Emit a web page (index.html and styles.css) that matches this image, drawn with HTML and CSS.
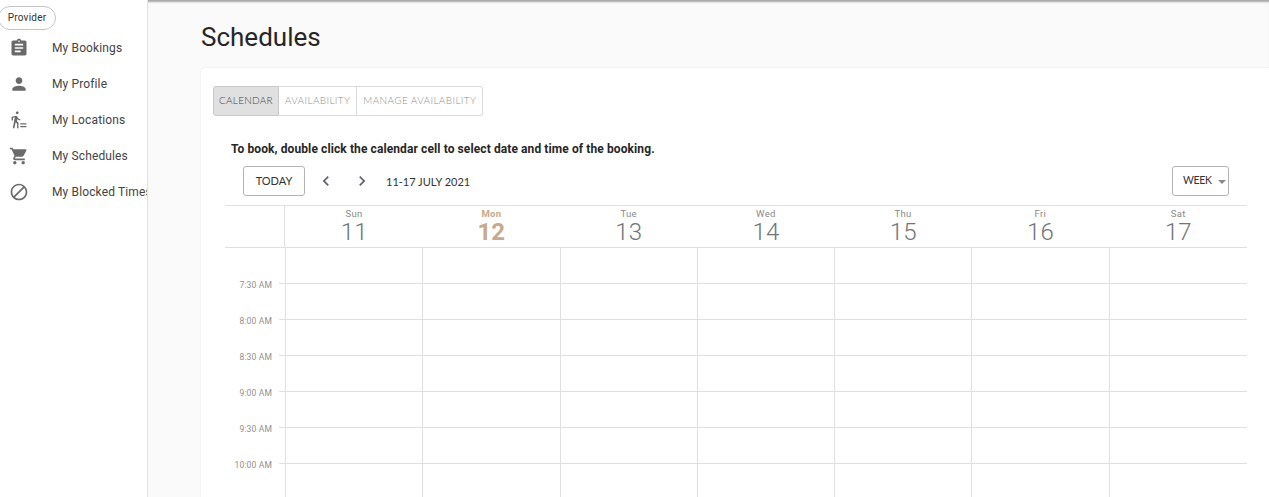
FILE: index.html
```html
<!DOCTYPE html>
<html lang="en">
<head>
<meta charset="utf-8">
<title>Schedules</title>
<link rel="stylesheet" href="styles.css">
</head>
<body>
<aside class="sidebar">
  <div class="pill">Provider</div>
  <nav class="nav">
    <a class="nav-item"><svg class="nav-icon" viewBox="0 0 24 24"><path d="M19 3h-4.18C14.4 1.84 13.3 1 12 1c-1.3 0-2.4.84-2.82 2H5c-1.1 0-2 .9-2 2v14c0 1.1.9 2 2 2h14c1.1 0 2-.9 2-2V5c0-1.1-.9-2-2-2zm-7 0c.55 0 1 .45 1 1s-.45 1-1 1-1-.45-1-1 .45-1 1-1zm2 14H7v-2h7v2zm3-4H7v-2h10v2zm0-4H7V7h10v2z"/></svg>My Bookings</a>
    <a class="nav-item"><svg class="nav-icon" viewBox="0 0 24 24"><path d="M12 12c2.21 0 4-1.79 4-4s-1.79-4-4-4-4 1.79-4 4 1.79 4 4 4zm0 2c-2.67 0-8 1.34-8 4v2h16v-2c0-2.66-5.33-4-8-4z"/></svg>My Profile</a>
    <a class="nav-item"><svg class="nav-icon" viewBox="1 0 23 23"><path d="M10.5 4.8c.9 0 1.6-.7 1.6-1.6s-.7-1.6-1.6-1.6-1.6.7-1.6 1.6.7 1.6 1.6 1.6zM7.6 8.2 5.4 21h1.8l1.4-7 1.7 1.7V21h1.6v-6.4l-1.7-1.7.5-2.5c.7 1 1.9 1.7 3.3 1.7v-1.6c-1.3 0-2.3-.7-2.8-1.7l-.8-1.3c-.3-.5-.8-.8-1.4-.8-.2 0-.4 0-.6.1L4 7.8V12h1.6V8.9l2-.7zM14 15.2h7v1.4h-7zM14 18.4h7v1.4h-7z"/></svg>My Locations</a>
    <a class="nav-item"><svg class="nav-icon" viewBox="0 0 24 24"><path d="M7 18c-1.1 0-1.99.9-1.99 2S5.9 22 7 22s2-.9 2-2-.9-2-2-2zM1 2v2h2l3.6 7.59-1.35 2.45c-.16.28-.25.61-.25.96 0 1.1.9 2 2 2h12v-2H7.42c-.14 0-.25-.11-.25-.25l.03-.12.9-1.63h7.45c.75 0 1.41-.41 1.75-1.03l3.58-6.49c.08-.14.12-.31.12-.48 0-.55-.45-1-1-1H5.21l-.94-2H1zm16 16c-1.1 0-1.99.9-1.99 2s.89 2 1.99 2 2-.9 2-2-.9-2-2-2z"/></svg>My Schedules</a>
    <a class="nav-item"><svg class="nav-icon" viewBox="0 0 24 24"><path d="M12 2C6.48 2 2 6.48 2 12s4.48 10 10 10 10-4.48 10-10S17.52 2 12 2zM4 12c0-4.42 3.58-8 8-8 1.85 0 3.55.63 4.9 1.69L5.69 16.9C4.63 15.55 4 13.85 4 12zm8 8c-1.85 0-3.55-.63-4.9-1.69L18.31 7.1C19.37 8.45 20 10.15 20 12c0 4.42-3.58 8-8 8z"/></svg>My Blocked Times</a>
  </nav>
</aside>
<main class="main">
  <h1 class="title">Schedules</h1>
  <section class="card">
    <div class="tabs">
      <button class="tab tab-active">CALENDAR</button>
      <button class="tab">AVAILABILITY</button>
      <button class="tab">MANAGE AVAILABILITY</button>
    </div>
    <div class="calendar">
      <p class="hint">To book, double click the calendar cell to select date and time of the booking.</p>
      <div class="toolbar">
        <button class="btn btn-today">TODAY</button>
        <svg class="chev chev-prev" viewBox="0 0 24 24"><path d="M15.41 7.41 14 6l-6 6 6 6 1.41-1.41L10.83 12z"/></svg>
        <svg class="chev chev-next" viewBox="0 0 24 24"><path d="M8.59 16.59 10 18l6-6-6-6-1.41 1.41L13.17 12z"/></svg>
        <span class="range">11-17 JULY 2021</span>
        <button class="btn btn-week">WEEK<span class="caret"></span></button>
      </div>
      <div class="head">
        <div class="head-gutter"></div>
        <div class="day"><span class="day-name">Sun</span><span class="day-num">11</span></div>
        <div class="day day-today"><span class="day-name">Mon</span><span class="day-num">12</span></div>
        <div class="day"><span class="day-name">Tue</span><span class="day-num">13</span></div>
        <div class="day"><span class="day-name">Wed</span><span class="day-num">14</span></div>
        <div class="day"><span class="day-name">Thu</span><span class="day-num">15</span></div>
        <div class="day"><span class="day-name">Fri</span><span class="day-num">16</span></div>
        <div class="day"><span class="day-name">Sat</span><span class="day-num">17</span></div>
      </div>
      <div class="row row-first"><div class="gutter"></div><i class="cell"></i><i class="cell"></i><i class="cell"></i><i class="cell"></i><i class="cell"></i><i class="cell"></i><i class="cell"></i></div>
      <div class="row"><div class="gutter"><span class="time">7:30 AM</span><span class="tick"></span></div><i class="cell line"></i><i class="cell line"></i><i class="cell line"></i><i class="cell line"></i><i class="cell line"></i><i class="cell line"></i><i class="cell line"></i></div>
      <div class="row"><div class="gutter"><span class="time">8:00 AM</span><span class="tick"></span></div><i class="cell line"></i><i class="cell line"></i><i class="cell line"></i><i class="cell line"></i><i class="cell line"></i><i class="cell line"></i><i class="cell line"></i></div>
      <div class="row"><div class="gutter"><span class="time">8:30 AM</span><span class="tick"></span></div><i class="cell line"></i><i class="cell line"></i><i class="cell line"></i><i class="cell line"></i><i class="cell line"></i><i class="cell line"></i><i class="cell line"></i></div>
      <div class="row"><div class="gutter"><span class="time">9:00 AM</span><span class="tick"></span></div><i class="cell line"></i><i class="cell line"></i><i class="cell line"></i><i class="cell line"></i><i class="cell line"></i><i class="cell line"></i><i class="cell line"></i></div>
      <div class="row"><div class="gutter"><span class="time">9:30 AM</span><span class="tick"></span></div><i class="cell line"></i><i class="cell line"></i><i class="cell line"></i><i class="cell line"></i><i class="cell line"></i><i class="cell line"></i><i class="cell line"></i></div>
      <div class="row"><div class="gutter"><span class="time">10:00 AM</span><span class="tick"></span></div><i class="cell line"></i><i class="cell line"></i><i class="cell line"></i><i class="cell line"></i><i class="cell line"></i><i class="cell line"></i><i class="cell line"></i></div>
    </div>
  </section>
</main>
</body>
</html>
```
FILE: styles.css
```css
* { box-sizing: border-box; }
html, body { height: 100%; }
body {
  margin: 0;
  height: 497px;
  display: flex;
  overflow: hidden;
  background: #fff;
  font-family: Roboto, "Liberation Sans", sans-serif;
  color: #212121;
}
.sidebar {
  flex: 0 0 148px;
  height: 100%;
  border-right: 1px solid #e3e3e3;
  overflow: hidden;
  padding-top: 6px;
}
.pill {
  width: 58px;
  height: 24px;
  margin-left: -2px;
  border: 1px solid #c4c4c4;
  border-radius: 12px;
  font-size: 10px;
  line-height: 22px;
  text-align: center;
  letter-spacing: .2px;
  color: #333;
  background: #fff;
}
.nav { margin-top: 0; }
.nav-item {
  display: flex;
  align-items: center;
  height: 36px;
  padding-left: 9px;
  font-size: 12px;
  letter-spacing: .13px;
  white-space: nowrap;
  color: #444;
}
.nav-icon {
  flex: 0 0 20px;
  width: 20px;
  height: 20px;
  margin-right: 23px;
  fill: #6a6a6a;
}
.main {
  flex: 1;
  min-width: 0;
  height: 100%;
  background: #fafafa;
  box-shadow: inset 0 3px 2px -1px #a8a8a8;
  padding: 0 0 0 53px;
  overflow: hidden;
}
.title {
  margin: 0;
  height: 68px;
  padding-top: 20px;
  font-size: 26px;
  line-height: 34px;
  font-weight: 400;
  color: #262626;
}
.card {
  margin-right: -20px;
  height: 440px;
  padding: 18px 0 0 12px;
  background: #fff;
  border-radius: 4px 0 0 0;
  box-shadow: 0 0 2px rgba(0, 0, 0, .1);
}
.tabs { display: flex; height: 30px; }
.tab {
  height: 30px;
  padding: 0 6px 2px;
  margin: 0;
  border: 1px solid #dcdcdc;
  border-left-width: 0;
  background: #fff;
  font-family: Lato, sans-serif;
  font-size: 10px;
  font-weight: 300;
  letter-spacing: .35px;
  color: #8f8f8f;
}
.tab:last-child { border-radius: 0 3px 3px 0; }
.tab-active {
  padding: 0 5px 2px;
  letter-spacing: .25px;
  border-left-width: 1px;
  border-color: #c8c8c8;
  background: #e0e0e0;
  color: #444;
  border-radius: 3px 0 0 3px;
}
.calendar { width: 1022px; margin-left: 12px; }
.hint {
  margin: 25px 0 0 6px;
  height: 16px;
  font-size: 12px;
  line-height: 16px;
  font-weight: 700;
  letter-spacing: .1px;
  color: #262626;
}
.toolbar {
  display: flex;
  align-items: center;
  height: 30px;
  margin-top: 9px;
  padding: 0 18px;
}
.btn {
  height: 30px;
  margin: 0;
  background: #fff;
  border: 1px solid #b4b4b4;
  border-radius: 3px;
  font-family: Lato, sans-serif;
  font-size: 11px;
  color: #333;
  padding: 0 0 2px;
}
.btn-today { width: 62px; }
.chev { width: 20px; height: 20px; fill: #5f6368; }
.chev-prev { margin-left: 11px; }
.chev-next { margin-left: 16px; }
.range {
  margin-left: 14px;
  font-family: Lato, sans-serif;
  font-size: 11px;
  color: #333;
}
.btn-week {
  width: 57px;
  margin-left: auto;
  display: flex;
  align-items: center;
  padding-left: 10px;
  font-size: 10.5px;
  letter-spacing: -.3px;
}
.caret {
  margin-left: 6px;
  margin-top: 3px;
  border-left: 4px solid transparent;
  border-right: 4px solid transparent;
  border-top: 4px solid #8a8a8a;
}
.head {
  display: flex;
  height: 43px;
  margin-top: 9px;
  border-top: 1px solid #e0e0e0;
  border-bottom: 1px solid #e0e0e0;
}
.head-gutter { flex: 0 0 60px; border-right: 1px solid #e0e0e0; }
.day {
  flex: 0 0 137.25px;
  display: flex;
  flex-direction: column;
  align-items: center;
  padding: 2px 0 0 1px;
  color: #70757a;
}
.day:last-child { flex: 1; }
.day-name { font-size: 9.5px; line-height: 12px; color: #8a8a8a; letter-spacing: .3px; }
.day-num { font-size: 24px; line-height: 24px; font-weight: 300; }
.day-today .day-name, .day-today .day-num { color: #c9a88c; font-weight: 700; }
.row { display: flex; height: 36px; }
.row-first { height: 35px; }
.gutter { flex: 0 0 60px; display: flex; justify-content: flex-end; }
.time {
  margin: -4px 7px 0 0;
  height: 12px;
  font-size: 8.5px;
  line-height: 12px;
  letter-spacing: .15px;
  white-space: nowrap;
  color: #8f8f8f;
}
.tick { width: 6px; height: 1px; background: #e0e0e0; }
.cell { flex: 0 0 137.25px; display: block; border-left: 1px solid #e0e0e0; }
.cell:last-child { flex: 1; }
.cell.line { border-top: 1px solid #e0e0e0; }
```
